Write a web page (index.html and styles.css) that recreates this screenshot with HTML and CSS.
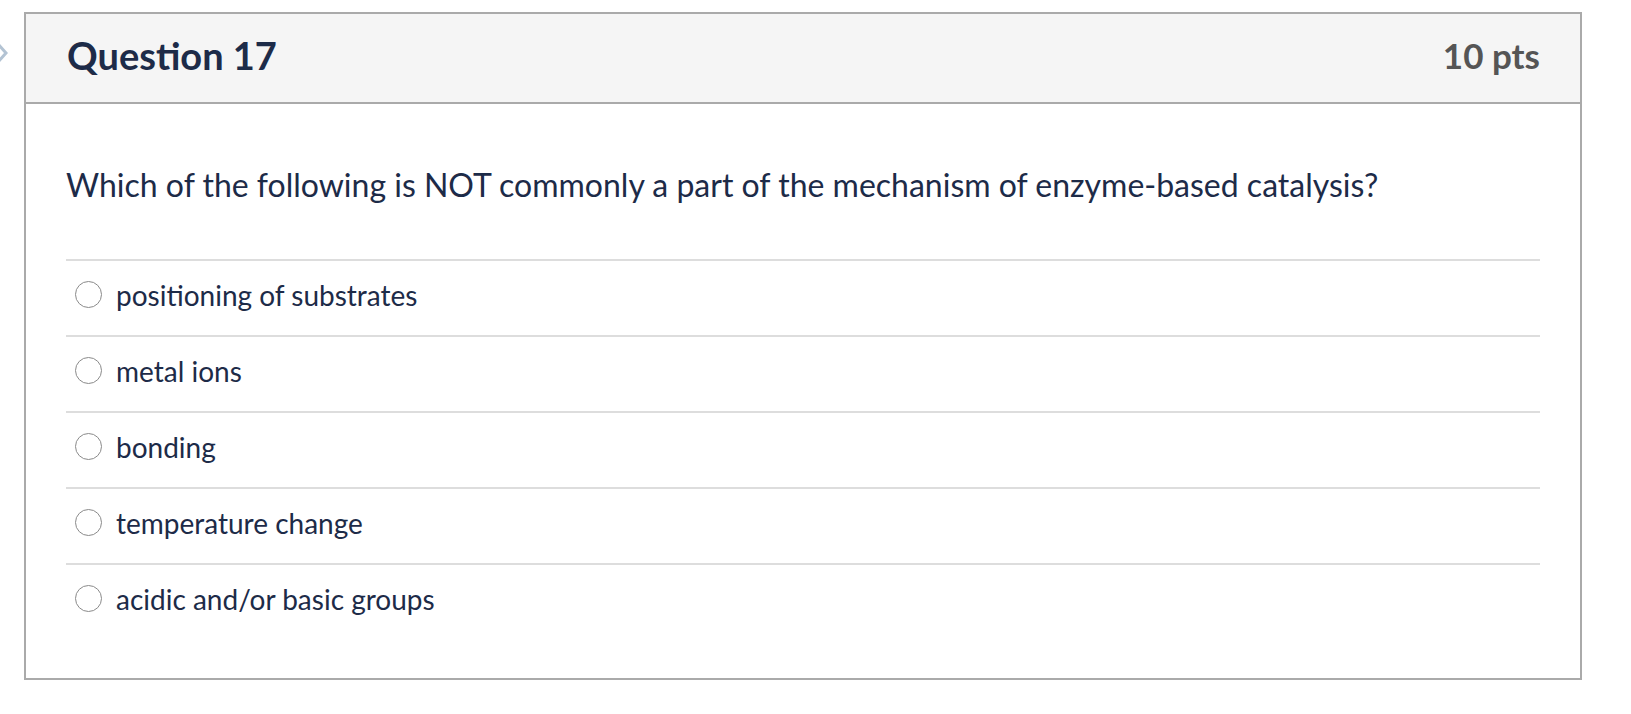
FILE: index.html
```html
<!DOCTYPE html>
<html lang="en">
<head>
<meta charset="utf-8">
<title>Question 17</title>
<link rel="stylesheet" href="styles.css">
</head>
<body>
<div class="page">
  <div class="gutter">
    <svg class="chev" width="12" height="24" viewBox="0 0 12 24"><polyline points="-2,3 6,12 -2,21" fill="none" stroke="#b3c3d3" stroke-width="3"/></svg>
  </div>
  <div class="card">
    <div class="header">
      <h2 class="title">Question 17</h2>
      <span class="pts">10 pts</span>
    </div>
    <div class="body">
      <p class="question">Which of the following is NOT commonly a part of the mechanism of enzyme-based catalysis?</p>
      <div class="answers">
        <label class="answer"><span class="radio"></span><span class="atext">positioning of substrates</span></label>
        <label class="answer"><span class="radio"></span><span class="atext">metal ions</span></label>
        <label class="answer"><span class="radio"></span><span class="atext">bonding</span></label>
        <label class="answer"><span class="radio"></span><span class="atext">temperature change</span></label>
        <label class="answer"><span class="radio"></span><span class="atext">acidic and/or basic groups</span></label>
      </div>
    </div>
  </div>
</div>
</body>
</html>
```
FILE: styles.css
```css
* { box-sizing: border-box; }
html, body { margin: 0; padding: 0; background: #fff; }
body { font-family: Lato, "Open Sans", sans-serif; color: #263345; }
.page { display: flex; align-items: flex-start; padding-top: 12px; }
.gutter { width: 24px; flex: none; padding-top: 29px; }
.chev { display: block; }
.card { width: 1558px; border: 2px solid #aaaaaa; background: #fff; }
.header {
  height: 90px;
  background: #f5f5f5;
  border-bottom: 2px solid #aaaaaa;
  display: flex;
  align-items: center;
  justify-content: space-between;
  padding: 0 40px 7px 41px;
}
.title { margin: 0; font-size: 38px; font-weight: 700; color: #1d2b48; }
.pts { font-size: 35px; font-weight: 700; color: #555555; }
.body { padding: 61px 40px 39px 40px; }
.question { margin: 0; font-size: 32px; line-height: 40px; color: #1d2b48; }
.answers { margin-top: 54px; display: flex; flex-direction: column; }
.answer {
  height: 76px;
  border-top: 2px solid #dddddd;
  display: flex;
  align-items: center;
  padding: 0 0 7px 9px;
  gap: 14px;
  font-size: 28px;
  color: #1d2b48;
}
.radio {
  width: 27px; height: 27px;
  border: 1.5px solid #8a8a8a;
  border-radius: 50%;
  background: #fff;
  flex: none;
}
```
